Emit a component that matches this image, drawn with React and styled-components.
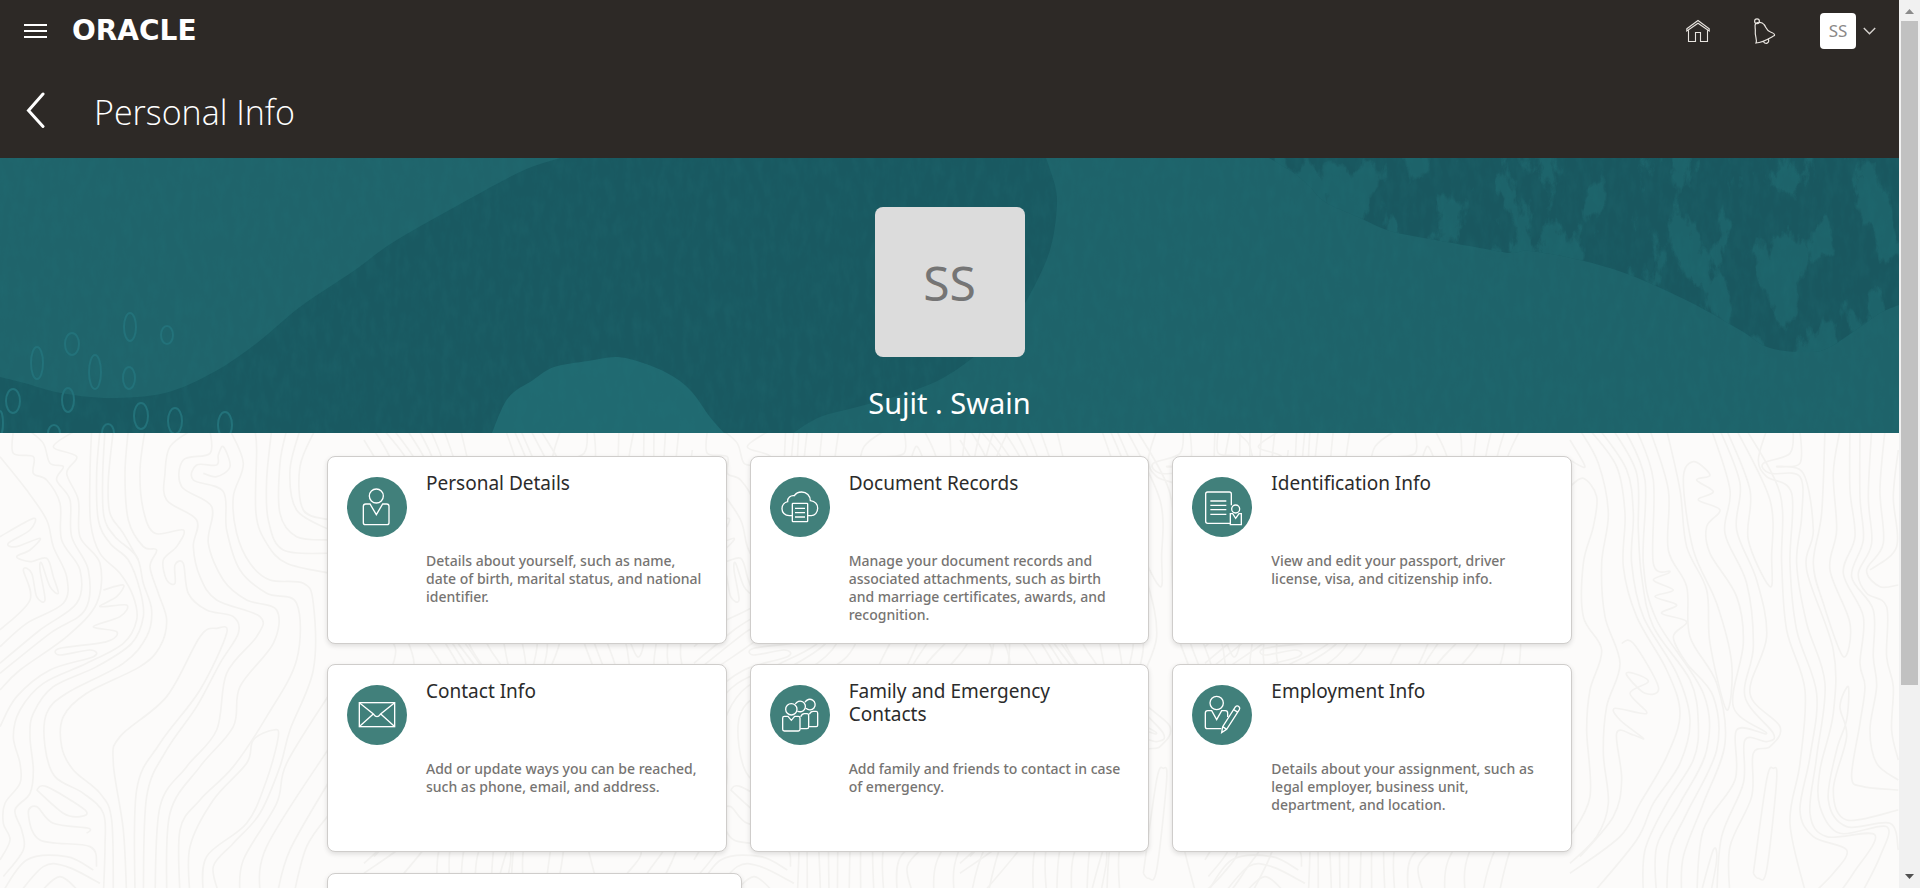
import React from 'react';
import styled, { createGlobalStyle } from 'styled-components';

const GlobalStyle = createGlobalStyle`
  *, *::before, *::after { box-sizing: border-box; }
  body { margin: 0; background: #fcfbfa; font-family: "Noto Sans", "Open Sans", sans-serif; color: #2b2b2b; }
  h1, h2, p { margin: 0; }
  button { font: inherit; color: inherit; background: none; border: 0; padding: 0; cursor: pointer; }
`;

const Shell = styled.div`
  display: flex;
  height: 100vh;
`;

const Page = styled.div`
  flex: 1;
  min-width: 0;
  overflow-y: auto;
  scrollbar-width: none;
`;

const Header = styled.header`
  background: #2d2926;
  color: #fff;
`;

const TopBar = styled.div`
  display: flex;
  align-items: center;
  height: 62px;
  padding: 0 23px 0 24px;
`;

const IconButton = styled.button`
  display: flex;
  align-items: center;
  justify-content: center;
  width: 24px;
  height: 36px;
`;

const Wordmark = styled.a`
  margin-left: 24px;
  font-family: "DejaVu Sans", sans-serif;
  font-weight: 700;
  font-size: 28px;
  line-height: 36px;
  color: #fff;
  text-decoration: none;
`;

const Tools = styled.nav`
  display: flex;
  align-items: center;
  gap: 43px;
  margin-left: auto;
`;

const UserMenu = styled.button`
  display: flex;
  align-items: center;
  gap: 7px;
`;

const UserBadge = styled.span`
  width: 36px;
  height: 36px;
  border-radius: 4px;
  background: #fff;
  color: #8a8886;
  font-size: 17px;
  line-height: 36px;
  text-align: center;
`;

const TitleBar = styled.div`
  display: flex;
  align-items: center;
  gap: 46px;
  height: 96px;
  padding: 0 24px;
`;

const PageTitle = styled.h1`
  padding-top: 3px;
  font-family: "Open Sans", sans-serif;
  font-weight: 300;
  font-size: 34px;
  line-height: 48px;
`;

const Banner = styled.section`
  position: relative;
  display: flex;
  flex-direction: column;
  align-items: center;
  padding: 49px 0 10px;
  background: #195961;
`;

const BannerArt = styled.svg`
  position: absolute;
  inset: 0;
  width: 100%;
  height: 100%;
`;

const Portrait = styled.div`
  position: relative;
  width: 150px;
  height: 150px;
  border-radius: 8px;
  background: #dcdcdc;
  color: #757575;
  font-size: 48px;
  line-height: 152px;
  text-align: center;
`;

const PersonName = styled.p`
  position: relative;
  margin-top: 26px;
  font-size: 29px;
  line-height: 40px;
  color: #fff;
`;

const Content = styled.main`
  position: relative;
  padding: 23px 24px 48px;
  overflow: hidden;
`;

const Contours = styled.svg`
  position: absolute;
  inset: 0;
  width: 100%;
  height: 100%;
  fill: none;
  stroke: #f3f2f0;
`;

const CardGrid = styled.div`
  position: relative;
  display: grid;
  grid-template-columns: repeat(3, 1fr);
  gap: 20px 23px;
  width: 100%;
  max-width: 1245px;
  margin: 0 auto;
`;

const LastRow = styled.div`
  position: relative;
  display: grid;
  grid-template-columns: repeat(3, 1fr);
  width: 100%;
  max-width: 1245px;
  margin: 21px auto 0;
`;

const Card = styled.a`
  display: grid;
  grid-template-columns: 60px 1fr;
  gap: 19px;
  min-height: 188px;
  padding: 15px 19px 13px;
  border: 1px solid #cfcdcb;
  border-radius: 8px;
  background: #fff;
  box-shadow: 0 2px 5px rgba(0, 0, 0, 0.12);
  color: inherit;
  text-decoration: none;
`;

const CardIcon = styled.svg`
  width: 60px;
  height: 60px;
  margin-top: 5px;
  border-radius: 50%;
  background: #41807b;
  fill: none;
  stroke: #fff;
  stroke-width: 4;
`;

const CardTitle = styled.h2`
  min-height: 80px;
  font-weight: 400;
  font-size: 19px;
  line-height: 23px;
`;

const CardText = styled.p`
  font-weight: 500;
  font-size: 14px;
  line-height: 18px;
  color: #767472;
`;

const ScrollRail = styled.div`
  display: flex;
  flex-direction: column;
  width: 21px;
  padding: 0 2px;
  background: #f1f1f1;
`;

const RailArrow = styled.svg`
  width: 17px;
  height: 21px;
  fill: ${(p) => p.$color};
`;

const RailTrack = styled.div`
  flex: 1;
`;

const RailThumb = styled.div`
  height: 78.5%;
  background: #c1c1c1;
`;

/* Smooth curve through a flat list of x, y pairs. */
function curve(flat) {
  const p = [];
  for (let i = 0; i < flat.length; i += 2) p.push([flat[i], flat[i + 1]]);
  let d = `M${p[0]}`;
  for (let i = 0; i < p.length - 1; i += 1) {
    const a = p[i - 1] || p[i];
    const b = p[i];
    const c = p[i + 1];
    const e = p[i + 2] || c;
    d += `C${b[0] + (c[0] - a[0]) / 6},${b[1] + (c[1] - a[1]) / 6} ${c[0] - (e[0] - b[0]) / 6},${c[1] - (e[1] - b[1]) / 6} ${c}`;
  }
  return d;
}

const contourSwirl = [
  [275, 0, 270, 130, 272, 280, 300, 370, 360, 430, 400, 500, 410, 570, 370, 640, 260, 700, 130, 760, 60, 840, 40, 920, 60, 1000, 60, 1060, 15, 1120, 10, 1180, 30, 1230, 0, 1290],
  [300, 0, 290, 130, 295, 270, 330, 340, 385, 390, 420, 480, 430, 560, 395, 640, 290, 710, 160, 770, 100, 850, 90, 920, 100, 1020, 90, 1090, 45, 1140, 65, 1200, 70, 1260, 10, 1340],
  [315, 0, 308, 140, 312, 260, 345, 320, 410, 380, 430, 460, 455, 540, 440, 620, 370, 700, 200, 790, 140, 850, 135, 950, 165, 1040, 250, 1090, 310, 1150, 315, 1250, 310, 1400],
  [340, 0, 325, 150, 330, 250, 370, 310, 415, 390],
  [385, 0, 375, 130, 385, 270, 430, 350, 470, 360, 450, 410, 475, 490, 500, 570, 480, 650, 420, 710, 260, 790, 190, 860, 185, 950, 220, 1020, 300, 1090, 335, 1170, 340, 1400],
  [435, 0, 420, 120, 430, 240, 465, 310, 550, 300, 530, 350, 490, 390, 500, 450, 525, 460, 525, 405, 550, 400, 565, 490, 620, 540, 700, 560, 715, 610, 660, 700, 590, 830, 500, 960, 440, 1100, 430, 1400],
  [575, 0, 510, 50, 495, 130, 500, 210, 590, 270, 580, 350, 600, 440, 650, 510, 780, 560, 770, 620, 680, 730, 650, 900, 560, 1010, 480, 1130, 465, 1400],
  [630, 0, 630, 70, 550, 90, 545, 170, 635, 230, 625, 340, 670, 450, 740, 510, 830, 540, 820, 640, 720, 770, 700, 890, 600, 1010, 510, 1150, 500, 1400],
  [610, 130, 650, 140, 690, 110, 670, 50, 655, 75, 650, 105, 590, 105, 580, 150, 670, 185, 680, 300, 720, 420, 800, 490, 890, 520, 890, 690, 800, 860, 700, 1010, 600, 1110, 540, 1200, 540, 1400],
  [690, 0, 730, 100, 700, 200, 710, 310, 750, 400, 810, 450, 910, 460, 940, 520, 940, 720, 870, 900, 840, 1010, 780, 1150, 700, 1240, 640, 1310, 660, 1400],
  [765, 0, 770, 60, 768, 250, 800, 340, 860, 400, 990, 430],
  [815, 0, 800, 150, 805, 270, 850, 360, 990, 370],
  [860, 0, 840, 100, 840, 250, 890, 320, 990, 330],
  [900, 0, 870, 120, 890, 240, 990, 300],
  [945, 0, 900, 110, 910, 240, 990, 270],
  [0, 80, 80, 180, 140, 270, 160, 350, 200, 440, 190, 520, 80, 580, 0, 650],
  [40, 0, 40, 70, 100, 80, 100, 130, 140, 150, 180, 220, 185, 330, 240, 420, 230, 520, 120, 600, 0, 700],
  [85, 0, 130, 40, 150, 100, 190, 110, 170, 150, 210, 210, 215, 320, 265, 420, 255, 540, 150, 610, 0, 730],
  [230, 0, 160, 50, 230, 80, 200, 130, 235, 210, 240, 320, 300, 400, 290, 520, 200, 620, 60, 720, 0, 780],
  [310, 480, 370, 465, 350, 500, 300, 530, 380, 525, 360, 560, 280, 590, 350, 605, 320, 635, 180, 655, 180, 675, 270, 660, 280, 680, 150, 720, 50, 800, 0, 890],
  [0, 320, 100, 265, 90, 300, 25, 340, 50, 350, 120, 325, 90, 360, 50, 380, 90, 395, 140, 385, 160, 440, 175, 490, 150, 470, 125, 400, 120, 420, 135, 510, 110, 500, 95, 430, 70, 420, 90, 510, 0, 600],
  [380, 1400, 370, 1200, 340, 1000, 360, 920, 500, 800, 600, 620, 650, 595, 680, 610, 600, 780, 480, 940, 410, 1080, 405, 1400],
  [570, 1400, 570, 1250, 640, 1110, 740, 1000, 760, 930, 820, 900, 835, 920, 800, 1050, 740, 1180, 620, 1280, 610, 1400],
  [720, 1400, 730, 1290, 830, 1120, 860, 1000, 990, 790],
  [780, 1400, 800, 1250, 990, 950],
  [830, 1400, 870, 1260, 990, 1050],
  [880, 1400, 920, 1250, 990, 1150],
  [0, 1400, 80, 1290, 200, 1280, 280, 1320],
  [50, 1400, 130, 1310, 200, 1310, 300, 1360],
  [110, 1400, 180, 1340, 250, 1400],
  [110, 1080, 140, 1070, 255, 1140, 240, 1160, 190, 1150, 110, 1080],
  [260, 1210, 265, 1195, 160, 1180, 110, 1130, 85, 1150, 120, 1230, 270, 1250, 290, 1310],
];

const contourGrain = [
  [0, 30, 45, 110, 0, 90],
  [0, 170, 40, 145, 80, 200, 70, 290, 40, 400, 40, 560, 95, 660, 60, 780, 50, 900, 60, 1100, 0, 1220],
  [30, 0, 85, 100, 115, 250, 95, 400, 105, 560, 150, 700, 110, 830, 100, 970, 115, 1120, 80, 1220, 0, 1300],
  [60, 0, 140, 110, 165, 250, 160, 410, 200, 560, 290, 720, 330, 850, 290, 980, 210, 1120, 150, 1220, 0, 1330],
  [90, 0, 170, 120, 190, 250, 185, 400, 220, 560, 320, 730, 360, 870, 330, 1000, 250, 1120, 200, 1230, 60, 1400],
  [130, 0, 200, 130, 205, 300, 215, 440, 250, 590, 360, 750, 385, 880, 370, 990, 290, 1120, 225, 1260, 220, 1400],
  [165, 0, 225, 150, 220, 400, 260, 570, 400, 790, 410, 960, 330, 1120, 260, 1250, 260, 1400],
  [200, 0, 250, 150, 250, 400, 300, 425, 250, 450, 310, 480, 255, 500, 320, 525, 275, 550, 350, 575, 310, 620, 350, 700, 430, 800, 440, 960, 350, 1150, 300, 1260, 290, 1400],
  [240, 0, 295, 180, 295, 360, 350, 470, 360, 620, 440, 760, 465, 940, 400, 1120, 340, 1280, 335, 1400],
  [290, 0, 330, 180, 350, 350, 410, 480, 420, 640, 470, 840, 485, 700, 440, 520, 370, 360, 340, 150, 370, 95, 420, 135, 380, 150, 430, 185, 385, 210, 450, 240, 410, 290, 420, 370, 500, 500, 520, 640, 490, 830, 590, 910, 500, 900, 495, 1050, 400, 1200, 380, 1400],
  [425, 0, 480, 180, 465, 310, 530, 460, 550, 650, 525, 800, 610, 910, 590, 935, 525, 930, 520, 1060, 455, 1220, 440, 1400],
  [450, 0, 510, 160, 500, 300, 560, 450, 590, 620, 540, 790, 630, 890, 600, 950, 550, 970, 545, 1100, 480, 1250, 480, 1400],
  [470, 0, 540, 180, 535, 330, 600, 470, 605, 380, 600, 210, 500, 0],
  [530, 0, 630, 190, 635, 400, 650, 600, 705, 780, 690, 1000, 660, 1180, 710, 1400],
  [590, 0, 565, 90, 590, 140, 665, 190, 660, 400, 680, 600, 740, 790, 720, 980, 690, 1140, 730, 1220, 830, 1260, 790, 1330, 720, 1400],
  [670, 0, 660, 70, 580, 100, 600, 130, 690, 140, 695, 260, 680, 400, 710, 580, 765, 760, 740, 980, 720, 1150, 770, 1220, 915, 1215, 850, 1330, 800, 1400],
  [690, 0, 690, 100, 620, 110, 700, 130, 730, 300, 710, 420, 790, 660, 790, 850, 750, 1020, 750, 1130, 810, 1210, 950, 1190, 930, 1280, 870, 1400],
  [765, 0, 755, 250, 730, 400, 760, 520, 820, 680, 840, 580, 780, 420, 800, 300, 790, 130, 810, 0],
  [840, 0, 840, 180, 855, 320, 820, 430, 880, 560, 870, 700, 885, 770, 870, 880, 845, 1040, 880, 1070, 985, 1080],
  [870, 0, 870, 200, 880, 330, 845, 440, 910, 540, 910, 680, 920, 770, 900, 900, 920, 1000, 985, 1050],
  [905, 0, 895, 200, 905, 340, 865, 430, 890, 490, 950, 530, 950, 680, 970, 770, 965, 900, 985, 990],
  [945, 0, 930, 180, 940, 340, 890, 420, 930, 470, 985, 465],
  [985, 60, 970, 200, 980, 350, 900, 420],
  [155, 640, 190, 640, 265, 770, 225, 790, 170, 735, 190, 730, 235, 755, 180, 790, 230, 850, 135, 835, 150, 870, 220, 925, 190, 915, 140, 910, 155, 1050, 130, 1160, 30, 1280],
  [550, 1330, 590, 1050, 610, 1015, 620, 1050, 590, 1320, 565, 1345, 550, 1330],
  [390, 1400, 430, 1260, 440, 1290, 420, 1400],
  [985, 1140, 830, 1170, 790, 1080, 830, 920, 810, 830, 835, 770, 830, 870, 800, 960, 775, 1110, 830, 1190, 960, 1180, 985, 1260],
];

const ovals = [
  [130, 169, 6, 14], [167, 177, 6, 9], [72, 186, 7, 11], [37, 205, 6, 16], [95, 214, 6, 17],
  [129, 220, 6, 11], [13, 243, 7, 12], [68, 242, 6, 12], [141, 258, 7, 13], [175, 263, 7, 13],
  [225, 267, 7, 13], [54, 275, 6, 8], [108, 275, 6, 9], [0, 265, 3, 12],
];

const leftHill = `${curve([560, 0, 520, 14, 453, 50, 392, 85, 355, 112, 300, 149, 257, 185, 214, 214, 165, 235, 110, 240, 61, 235, 24, 225, 0, 219])}V0Z`;
const mound = `${curve([492, 275, 508, 240, 533, 222, 554, 209, 588, 203, 618, 199, 649, 207, 674, 219, 692, 234, 710, 259, 724, 275])}Z`;
const rightHill = `${curve([1046, 0, 1056, 32, 1056, 59, 1050, 92, 1036, 125, 1015, 160, 985, 190, 943, 220, 900, 237, 857, 249, 820, 259, 793, 275])}H1899V0Z`;
const darkRock = `${curve([1269, 0, 1294, 15, 1310, 29, 1325, 44, 1358, 59, 1390, 73, 1430, 81, 1475, 89, 1510, 95, 1530, 93, 1580, 102, 1630, 117, 1690, 144, 1740, 172, 1770, 190, 1810, 194, 1830, 189, 1860, 169, 1880, 155, 1899, 147])}V0Z`;

function BannerScene() {
  return (
    <BannerArt viewBox="0 0 1899 275" preserveAspectRatio="xMidYMid slice" aria-hidden="true">
      <defs>
        <filter id="flakes" x="0" y="0" width="1" height="1" colorInterpolationFilters="sRGB">
          <feTurbulence type="fractalNoise" baseFrequency="0.03 0.014" numOctaves="6" seed="8" />
          <feColorMatrix values="0 0 0 0 0.125  0 0 0 0 0.41  0 0 0 0 0.435  14 0 0 0 -7.5" />
          <feComposite in2="SourceGraphic" operator="in" />
        </filter>
        <filter id="grain" x="0" y="0" width="1" height="1" colorInterpolationFilters="sRGB">
          <feTurbulence type="fractalNoise" baseFrequency="0.12 0.05" numOctaves="4" seed="3" />
          <feColorMatrix values="0 0 0 0 0.14  0 0 0 0 0.46  0 0 0 0 0.48  1.4 0 0 0 -0.5" />
        </filter>
      </defs>
      <path d={leftHill} fill="#1f646b" />
      <path d={rightHill} fill="#1e636a" />
      <path d={darkRock} fill="#19575f" />
      <path d={darkRock} filter="url(#flakes)" opacity="0.7" />
      <path d={mound} fill="#206a71" />
      <g fill="none" stroke="#23727a" strokeWidth="2">
        {ovals.map(([x, y, rx, ry]) => (
          <ellipse key={`${x}-${y}`} cx={x} cy={y} rx={rx} ry={ry} />
        ))}
      </g>
      <rect width="1899" height="275" filter="url(#grain)" opacity="0.25" />
    </BannerArt>
  );
}

const contourTiles = [
  [0, contourSwirl], [364, contourGrain], [694, contourSwirl], [960, contourGrain], [1205, contourSwirl], [1570, contourGrain],
];

function ContourBackdrop() {
  return (
    <Contours aria-hidden="true">
      {contourTiles.map(([x, lines]) => (
        <g key={x} transform={`translate(${x} -3) scale(0.3333)`} strokeWidth="5">
          {lines.map((line, i) => (
            <path key={i} d={curve(line)} />
          ))}
        </g>
      ))}
    </Contours>
  );
}

const icons = {
  person: (
    <>
      <circle cx="88" cy="57" r="21" />
      <path d="M69 81H56q-7 0-7 7v49q0 6 6 6h65q6 0 6-6V88q0-7-7-7h-12L88 113Z" />
    </>
  ),
  records: (
    <>
      <path d="M66 116H58C44 116 36 106 36 95S44 76 53 74C52 62 62 54 73 56C78 48 86 45 95 45C110 45 121 56 121 71C135 73 143 82 143 94C143 107 134 116 124 116H114" />
      <rect x="67" y="79" width="46" height="55" rx="2" />
      <path d="M75 94h30M75 107h30M75 120h30" />
    </>
  ),
  identification: (
    <>
      <path d="M118 85V51q0-6-6-6H47q-6 0-6 6v82q0 6 6 6h67" />
      <path d="M55 72h48M55 85h48M55 98h48M55 112h48" />
      <circle cx="131" cy="96" r="12" />
      <path d="M122 110h-7v33h33v-33h-7l-10 14Z" />
    </>
  ),
  mail: (
    <>
      <rect x="37" y="53" width="106" height="72" />
      <path d="M38 54L80 88q10 14 20 0L142 54M38 124L78 88M142 124L102 88" />
    </>
  ),
  family: (
    <>
      <circle cx="64" cy="73" r="17" />
      <path d="M76 57A16 16 0 1 1 82 78M105 52A16 16 0 1 1 108 70" />
      <path d="M43 94h11l10 12 10-12h11q5 0 5 5v34q0 5-5 5H43q-5 0-5-5V99q0-5 5-5Z" />
      <path d="M92 95q4-9 11-9h8q5 0 5 6v34q0 5-5 5H91M118 88q4-9 11-9h10q4 0 4 6v36q0 4-4 4h-22" />
    </>
  ),
  employment: (
    <>
      <circle cx="74" cy="54" r="20" />
      <path d="M88 131H46q-6 0-6-6V84q0-7 7-7h12l15 27 15-27h11q7 0 7 7v12" />
      <path d="M130 66q5-6 11-1 4 4 1 9L104 133 89 143l3-18ZM125 74l13 8M92 125l12 8" />
    </>
  ),
};

const cards = [
  { icon: 'person', title: 'Personal Details', text: 'Details about yourself, such as name, date of birth, marital status, and national identifier.' },
  { icon: 'records', title: 'Document Records', text: 'Manage your document records and associated attachments, such as birth and marriage certificates, awards, and recognition.' },
  { icon: 'identification', title: 'Identification Info', text: 'View and edit your passport, driver license, visa, and citizenship info.' },
  { icon: 'mail', title: 'Contact Info', text: 'Add or update ways you can be reached, such as phone, email, and address.' },
  { icon: 'family', title: 'Family and Emergency Contacts', text: 'Add family and friends to contact in case of emergency.' },
  { icon: 'employment', title: 'Employment Info', text: 'Details about your assignment, such as legal employer, business unit, department, and location.' },
];

export default function App() {
  return (
    <Shell>
      <GlobalStyle />
      <Page>
        <Header>
          <TopBar>
            <IconButton aria-label="Navigator">
              <svg width="24" height="18" stroke="#fff" strokeWidth="2">
                <path d="M0 3h23M0 9h23M0 15h23" />
              </svg>
            </IconButton>
            <Wordmark href="#">ORACLE</Wordmark>
            <Tools>
              <IconButton aria-label="Home">
                <svg width="24" height="24" fill="none" stroke="#e8e4df" strokeWidth="1.1">
                  <path d="M.8 9.800L12 1.500l11.200 8.300v2.200L12 4.200.8 12ZM2.500 11.500V22.500h7V13.500h5v9h7V11.500" />
                </svg>
              </IconButton>
              <IconButton aria-label="Notifications">
                <svg width="24" height="26" fill="none" stroke="#e8e4df" strokeWidth="1.2">
                  <path d="M3 25C4.500 21.500 1.800 18 2.300 14C2.800 10.500 1 7.500 2.700 5.500C5 4 8.800 3.500 11 6.500C13.500 9.500 13 12.500 17.500 14C20 14.800 22 15.800 21.500 17.500C15.500 20.800 10 24.500 3 25Z" />
                  <circle cx="4" cy="3.200" r="2.400" />
                  <path d="M10.500 23A2.600 2.600 0 1 0 15 21" />
                </svg>
              </IconButton>
              <UserMenu aria-label="Settings and actions">
                <UserBadge>SS</UserBadge>
                <svg width="13" height="8" fill="none" stroke="#d8d4d0" strokeWidth="1.400">
                  <path d="M.8 1l5.700 5.700L12.200 1" />
                </svg>
              </UserMenu>
            </Tools>
          </TopBar>
          <TitleBar>
            <IconButton aria-label="Back">
              <svg width="24" height="36" fill="none" stroke="#fff" strokeWidth="3" strokeLinecap="round">
                <path d="M19 2L4.500 18.500 19 34.500" />
              </svg>
            </IconButton>
            <PageTitle>Personal Info</PageTitle>
          </TitleBar>
        </Header>
        <Banner>
          <BannerScene />
          <Portrait>SS</Portrait>
          <PersonName>Sujit . Swain</PersonName>
        </Banner>
        <Content>
          <ContourBackdrop />
          <CardGrid>
            {cards.map((card) => (
              <Card key={card.title} href="#">
                <CardIcon viewBox="0 0 180 180" aria-hidden="true">{icons[card.icon]}</CardIcon>
                <div>
                  <CardTitle>{card.title}</CardTitle>
                  <CardText>{card.text}</CardText>
                </div>
              </Card>
            ))}
          </CardGrid>
          <LastRow>
            <Card as="div" />
          </LastRow>
        </Content>
      </Page>
      <ScrollRail aria-hidden="true">
        <RailArrow $color="#8b8b8b" viewBox="0 0 17 21"><path d="M4 14l4.500-5 4.500 5Z" /></RailArrow>
        <RailTrack><RailThumb /></RailTrack>
        <RailArrow $color="#505050" viewBox="0 0 17 21"><path d="M4 7l4.500 5L13 7Z" /></RailArrow>
      </ScrollRail>
    </Shell>
  );
}
